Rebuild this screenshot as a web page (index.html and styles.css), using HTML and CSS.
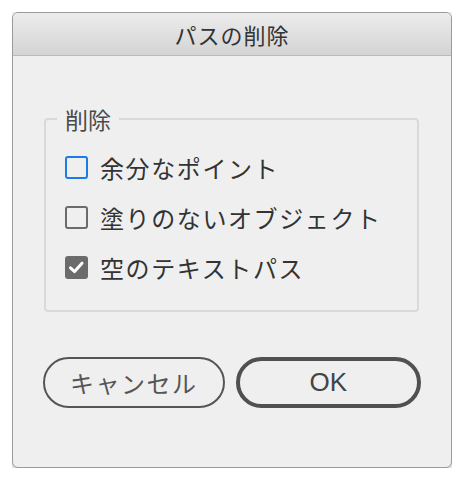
FILE: index.html
```html
<!DOCTYPE html>
<html lang="ja">
<head>
    <meta charset="UTF-8">
    <title>パスの削除</title>
    <link rel="stylesheet" href="styles.css">
</head>
<body>
    <div class="window">
        <div class="titlebar">パスの削除</div>
        <div class="content">
            <fieldset class="group">
                <legend>削除</legend>
                <label class="row">
                    <span class="box focus"></span>
                    <span class="label">余分なポイント</span>
                </label>
                <label class="row">
                    <span class="box"></span>
                    <span class="label">塗りのないオブジェクト</span>
                </label>
                <label class="row">
                    <span class="box checked">
                        <svg width="23" height="23" viewBox="0 0 23 23"><path d="M5.5 11.8 L9.6 15.6 L17 7.2" fill="none" stroke="#fff" stroke-width="3" stroke-linecap="round" stroke-linejoin="round"/></svg>
                    </span>
                    <span class="label">空のテキストパス</span>
                </label>
            </fieldset>
            <div class="buttons">
                <button class="btn">キャンセル</button>
                <button class="btn default">OK</button>
            </div>
        </div>
    </div>
</body>
</html>
```

FILE: styles.css
```css
* {
    box-sizing: border-box;
}
body {
    margin: 12px;
    background: #fff;
    font-family: "Noto Sans CJK JP", "Noto Sans", sans-serif;
}
.window {
    width: 440px;
    height: 456px;
    border: 1px solid #9a9a9a;
    border-radius: 6px;
    background: #efefef;
    box-shadow: 0 2px 8px rgba(0, 0, 0, 0.3);
    overflow: hidden;
}
.titlebar {
    height: 43px;
    border-bottom: 1px solid #b9b9b9;
    background: linear-gradient(#ececec, #d4d4d4);
    color: #333;
    font-size: 22px;
    line-height: 42px;
    text-align: center;
    letter-spacing: 1px;
}
.content {
    padding: 0 30px;
}
.group {
    margin: 51px 2px 0 1px;
    padding: 11px 19px 18px;
    border: 2px solid #d9d9d9;
    border-radius: 4px;
    min-width: 0;
}
.group legend {
    margin-left: -8px;
    padding: 0 8px;
    font-size: 23px;
    line-height: 24px;
    color: #4a4a4a;
}
.row {
    display: flex;
    align-items: center;
    gap: 12px;
    height: 50px;
}
.box {
    width: 23px;
    height: 23px;
    border: 2px solid #6b6b6b;
    border-radius: 3px;
    flex: none;
    background: #fff;
    background: transparent;
}
.box.focus {
    border-color: #1a7ce9;
}
.box.checked {
    border: none;
    background: #6b6b6b;
}
.box svg {
    display: block;
}
.label {
    font-size: 24px;
    letter-spacing: 1.6px;
    color: #333;
}
.buttons {
    display: flex;
    gap: 11px;
    margin-top: 45px;
}
.btn {
    flex: 1;
    height: 51px;
    border: 2px solid #555;
    border-radius: 26px;
    background: transparent;
    font-family: "Noto Sans CJK JP", "Noto Sans", sans-serif;
    font-size: 24px;
    letter-spacing: 1.5px;
    color: #555;
    padding: 0;
}
.btn.default {
    border: 4px solid #505050;
    font-family: "Liberation Sans", "Noto Sans CJK JP", sans-serif;
    font-size: 26px;
    letter-spacing: 0;
    color: #444;
}
```
